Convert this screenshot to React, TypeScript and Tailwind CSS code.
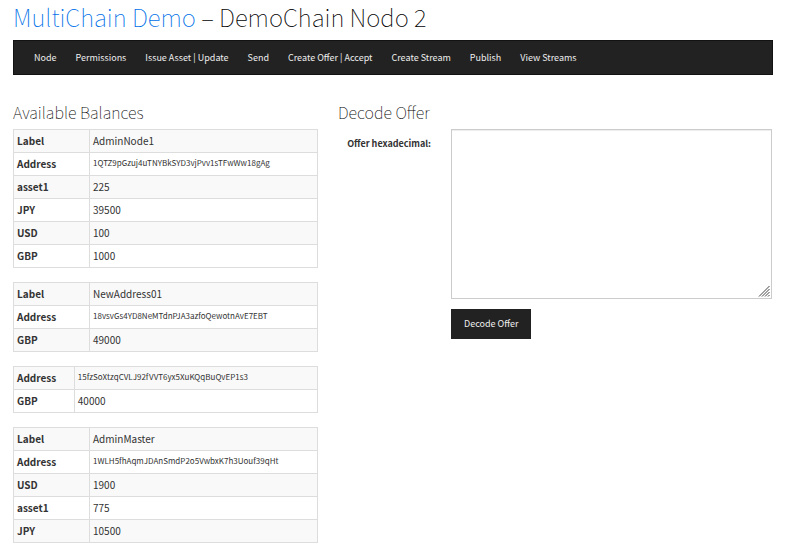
type Row = [name: string, value: string];

const accounts: { wide: boolean; rows: Row[] }[] = [
  {
    wide: true,
    rows: [
      ["Label", "AdminNode1"],
      ["Address", "1QTZ9pGzuj4uTNYBkSYD3vjPvv1sTFwWw18gAg"],
      ["asset1", "225"],
      ["JPY", "39500"],
      ["USD", "100"],
      ["GBP", "1000"],
    ],
  },
  {
    wide: true,
    rows: [
      ["Label", "NewAddress01"],
      ["Address", "18vsvGs4YD8NeMTdnPJA3azfoQewotnAvE7EBT"],
      ["GBP", "49000"],
    ],
  },
  {
    wide: false,
    rows: [
      ["Address", "15fzSoXtzqCVLJ92fVVT6yx5XuKQqBuQvEP1s3"],
      ["GBP", "40000"],
    ],
  },
  {
    wide: true,
    rows: [
      ["Label", "AdminMaster"],
      ["Address", "1WLH5fhAqmJDAnSmdP2o5VwbxK7h3Uouf39qHt"],
      ["USD", "1900"],
      ["asset1", "775"],
      ["JPY", "10500"],
    ],
  },
];

const links = [
  "Node",
  "Permissions",
  "Issue Asset | Update",
  "Send",
  "Create Offer | Accept",
  "Create Stream",
  "Publish",
  "View Streams",
];

function AccountTable({ wide, rows }: { wide: boolean; rows: Row[] }) {
  return (
    <table className="w-full table-fixed border-collapse border border-[#dddddd] leading-4">
      <colgroup>
        <col className={wide ? "w-1/4" : "w-1/5"} />
        <col />
      </colgroup>
      <tbody>
        {rows.map(([name, value]) => (
          <tr key={name} className="h-[23px] odd:bg-[#f9f9f9]">
            <th scope="row" className="border border-[#dddddd] px-[3px] text-left font-bold">
              {name}
            </th>
            <td className="border border-[#dddddd] px-[3px]">
              {name === "Address" ? <span className="block pb-0.5 text-[8px]">{value}</span> : value}
            </td>
          </tr>
        ))}
      </tbody>
    </table>
  );
}

export default function App() {
  return (
    <div className="bg-white pr-[29px] pb-4 pl-[13px] font-['Noto_Sans_CJK_SC','Noto_Sans',sans-serif] text-[10px] text-[#333333]">
      <h1 className="text-2xl leading-[34px] font-thin text-black">
        <a href="#home" className="text-[#0070e8]">
          MultiChain Demo
        </a>{" "}
        – DemoChain Nodo 2
      </h1>
      <nav className="mt-1.5 flex h-[35px] items-center gap-[19px] border border-[#121212] bg-[#222222] px-5 text-[9px] leading-4 text-[#eeeeee]">
        {links.map((link) => (
          <a key={link} href="#nav" className="whitespace-nowrap">
            {link}
          </a>
        ))}
      </nav>
      <div className="mt-6 grid grid-cols-[305fr_435fr] gap-5">
        <section>
          <h2 className="mb-1 text-[16px] leading-[26px] font-thin text-black">Available Balances</h2>
          <div className="flex flex-col gap-3.5">
            {accounts.map((account) => (
              <AccountTable key={account.rows.map((row) => row[1]).join()} {...account} />
            ))}
          </div>
        </section>
        <section>
          <h2 className="mb-1 text-[16px] leading-[26px] font-thin text-black">Decode Offer</h2>
          <form
            className="grid grid-cols-[93fr_321fr] gap-x-5 gap-y-2.5 pr-px"
            onSubmit={(e) => e.preventDefault()}
          >
            <label htmlFor="offer" className="pt-[7px] text-right text-[9px] leading-4 font-bold whitespace-nowrap">
              Offer hexadecimal:
            </label>
            <div className="relative">
              <textarea
                id="offer"
                className="block h-[170px] w-full resize-none border border-[#cccccc] bg-white px-3 py-1.5 shadow-[inset_0_1px_1px_rgba(0,0,0,0.075)]"
              />
              <svg
                aria-hidden="true"
                viewBox="0 0 12 12"
                className="pointer-events-none absolute right-0.5 bottom-0.5 size-3"
                stroke="#444444"
                strokeWidth="1"
              >
                <path d="M1 11.5 11.5 1M4 11.5 11.5 4M7 11.5 11.5 7M10 11.5 11.5 10" />
              </svg>
            </div>
            <button
              type="submit"
              className="col-start-2 h-[30px] justify-self-start bg-[#222222] px-[13px] text-[9px] leading-4 text-[#eeeeee]"
            >
              Decode Offer
            </button>
          </form>
        </section>
      </div>
    </div>
  );
}
